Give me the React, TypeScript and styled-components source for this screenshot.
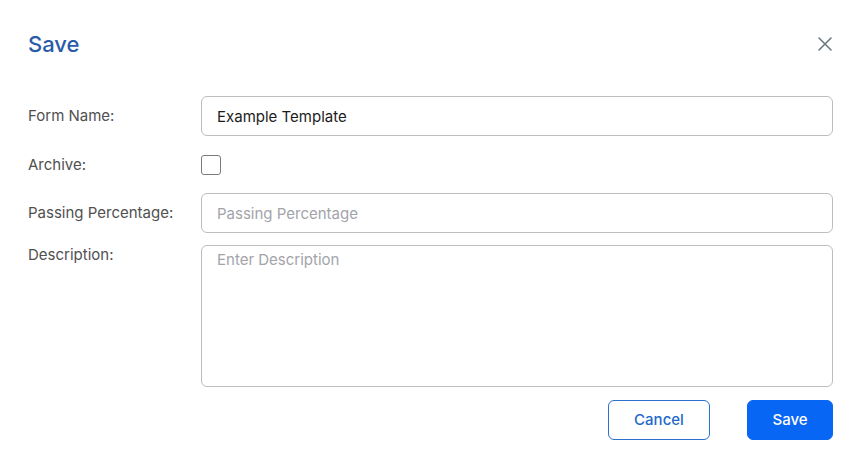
import React from "react";
import styled, { createGlobalStyle } from "styled-components";

const Global = createGlobalStyle`
  html, body { margin: 0; padding: 0; background: #ffffff; }
  body { font-family: Inter, "Noto Sans", sans-serif; }
  * { box-sizing: border-box; }
`;

const Dialog = styled.div`
  width: 859px;
  height: 460px;
  padding: 28px 26px 0 28px;
  display: flex;
  flex-direction: column;
`;

const Header = styled.div`
  display: flex;
  align-items: center;
  justify-content: space-between;
  height: 32px;
`;

const Title = styled.h2`
  margin: 0;
  font-size: 22px;
  font-weight: 500;
  line-height: 32px;
  color: #2a5ba8;
`;

const CloseButton = styled.button`
  border: none;
  background: none;
  padding: 0;
  margin-right: 1px;
  width: 14px;
  height: 14px;
  display: flex;
  cursor: pointer;
`;

const Form = styled.div`
  margin-top: 36px;
  display: flex;
  flex-direction: column;
  gap: 12px;
`;

const Row = styled.div<{ $top?: boolean; $pad?: string }>`
  display: grid;
  grid-template-columns: 173px 1fr;
  align-items: ${(p) => (p.$top ? "start" : "center")};
  padding: ${(p) => p.$pad || "0"};
`;

const Label = styled.label`
  font-size: 15px;
  line-height: 20px;
  color: #505050;
`;

const TextInput = styled.input`
  height: 40px;
  width: 100%;
  border: 1px solid #bdbdbd;
  border-radius: 6px;
  padding: 0 15px;
  font-family: Inter, sans-serif;
  font-size: 15px;
  color: #1c1c1c;
  outline: none;
  &::placeholder { color: #a2a4aa; }
`;

const TextArea = styled.textarea`
  height: 142px;
  width: 100%;
  border: 1px solid #bdbdbd;
  border-radius: 6px;
  padding: 4px 15px;
  font-family: Inter, sans-serif;
  font-size: 15px;
  line-height: 20px;
  resize: none;
  outline: none;
  &::placeholder { color: #a2a4aa; }
`;

const Checkbox = styled.span`
  display: block;
  width: 20px;
  height: 20px;
  border: 1.5px solid #7a7a7a;
  border-radius: 3px;
`;

const Footer = styled.div`
  margin-top: 13px;
  display: flex;
  justify-content: flex-end;
  gap: 37px;
`;

const Button = styled.button<{ $primary?: boolean }>`
  height: 40px;
  padding: 0 0 2px 0;
  width: ${(p) => (p.$primary ? "86px" : "102px")};
  border-radius: 6px;
  font-family: Inter, sans-serif;
  font-size: 15px;
  font-weight: 500;
  cursor: pointer;
  border: 1px solid ${(p) => (p.$primary ? "#0866f5" : "#2d71d0")};
  background: ${(p) => (p.$primary ? "#0866f5" : "#ffffff")};
  color: ${(p) => (p.$primary ? "#ffffff" : "#2369c9")};
`;

export default function App() {
  return (
    <>
      <Global />
      <Dialog>
        <Header>
          <Title>Save</Title>
          <CloseButton aria-label="Close">
            <svg width="14" height="14" viewBox="0 0 14 14">
              <path d="M1 1 L13 13 M13 1 L1 13" stroke="#6b7a80" strokeWidth="1.6" strokeLinecap="round" />
            </svg>
          </CloseButton>
        </Header>
        <Form>
          <Row>
            <Label>Form Name:</Label>
            <TextInput defaultValue="Example Template" />
          </Row>
          <Row $pad="7px 0 6px 0">
            <Label>Archive:</Label>
            <Checkbox />
          </Row>
          <Row>
            <Label>Passing Percentage:</Label>
            <TextInput placeholder="Passing Percentage" />
          </Row>
          <Row $top>
            <Label>Description:</Label>
            <TextArea placeholder="Enter Description" />
          </Row>
        </Form>
        <Footer>
          <Button>Cancel</Button>
          <Button $primary>Save</Button>
        </Footer>
      </Dialog>
    </>
  );
}
